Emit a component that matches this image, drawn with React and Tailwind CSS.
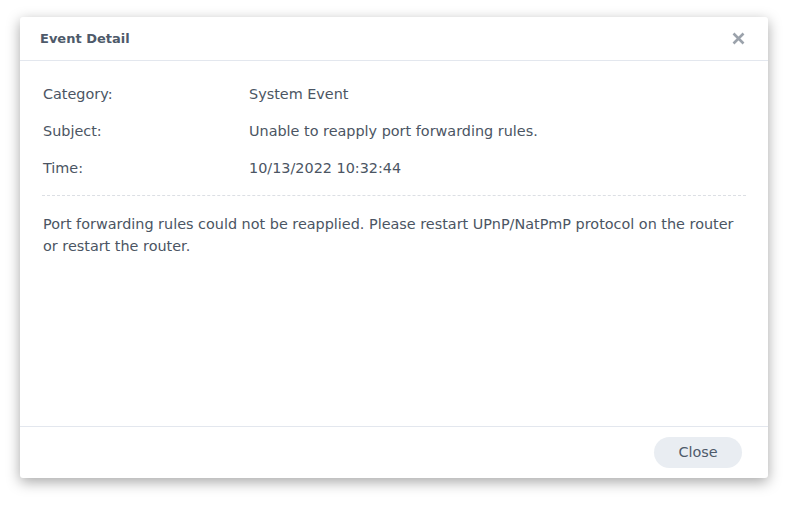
import React from 'react';

function EventDetailDialog() {
  const rows = [
    { label: 'Category:', value: 'System Event' },
    { label: 'Subject:', value: 'Unable to reapply port forwarding rules.' },
    { label: 'Time:', value: '10/13/2022 10:32:44' },
  ];

  return (
    <div className="w-[748px] h-[461px] bg-white rounded-[3px] shadow-[0_4px_14px_rgba(0,0,0,0.35)] flex flex-col">
      {/* Header */}
      <div className="h-[44px] flex items-center justify-between pl-[20px] pr-[22px] border-b border-[#e3e7ee] shrink-0">
        <h2 className="text-[13px] font-bold text-[#4e5a6a]">Event Detail</h2>
        <button className="w-[16px] h-[16px] flex items-center justify-center text-[#9ba2ab]">
          <svg width="13" height="13" viewBox="0 0 13 13">
            <path d="M1.5 1.5 L11.5 11.5 M11.5 1.5 L1.5 11.5" stroke="currentColor" strokeWidth="2.6" strokeLinecap="butt" />
          </svg>
        </button>
      </div>

      {/* Body */}
      <div className="flex-1 px-[22px] pt-[23px]">
        <div className="flex flex-col gap-[17px]">
          {rows.map((row) => (
            <div key={row.label} className="flex leading-[20px] text-[14.4px] text-[#4b5563]">
              <span className="w-[207px] pl-[1px]">{row.label}</span>
              <span>{row.value}</span>
            </div>
          ))}
        </div>
        <div className="mt-[17px] border-t border-dashed border-[#dcdfe4]" />
        <p className="mt-[18px] pl-[1px] text-[14.4px] leading-[21.5px] text-[#4b5563] pr-[4px]">
          Port forwarding rules could not be reapplied. Please restart UPnP/NatPmP protocol on the router or restart the router.
        </p>
      </div>

      {/* Footer */}
      <div className="h-[52px] border-t border-[#e3e7ee] flex justify-end pt-[10px] pr-[26px] shrink-0">
        <button className="w-[88px] h-[31px] rounded-full bg-[#e9edf2] text-[14.4px] text-[#4e5a6a]">
          Close
        </button>
      </div>
    </div>
  );
}

export default function App() {
  return (
    <div className="w-[794px] h-[506px] bg-white pl-[20px] pt-[17px] font-['DejaVu_Sans',sans-serif]">
      <EventDetailDialog />
    </div>
  );
}
